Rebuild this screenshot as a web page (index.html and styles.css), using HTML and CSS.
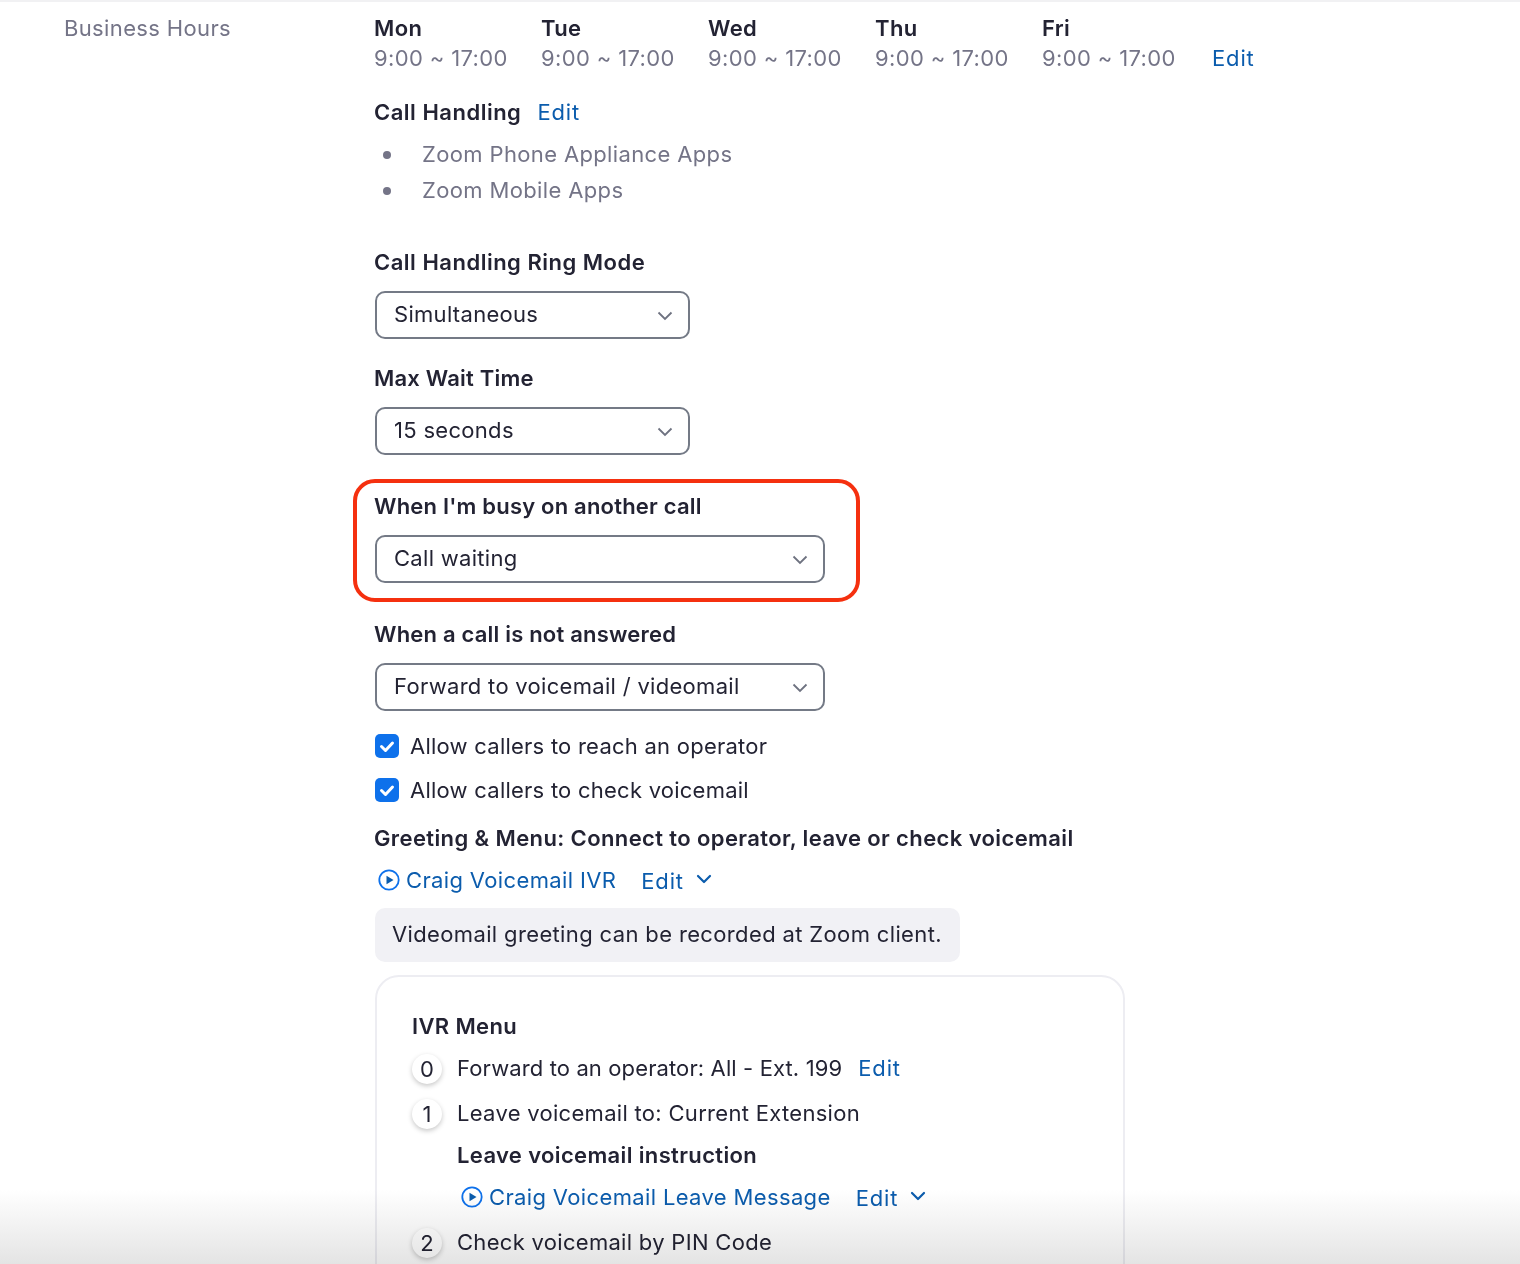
FILE: index.html
```html
<!DOCTYPE html>
<html lang="en">
<head>
<meta charset="utf-8">
<title>Business Hours</title>
<link rel="stylesheet" href="styles.css">
</head>
<body>
<main class="page">
  <div class="side-label">Business Hours</div>
  <div class="content">
    <div class="hours">
      <div class="day"><div class="strong">Mon</div><div class="muted">9:00 ~ 17:00</div></div>
      <div class="day"><div class="strong">Tue</div><div class="muted">9:00 ~ 17:00</div></div>
      <div class="day"><div class="strong">Wed</div><div class="muted">9:00 ~ 17:00</div></div>
      <div class="day"><div class="strong">Thu</div><div class="muted">9:00 ~ 17:00</div></div>
      <div class="day"><div class="strong">Fri</div><div class="muted">9:00 ~ 17:00</div></div>
      <a class="link edit hours-edit">Edit</a>
    </div>

    <div class="strong handling"><span>Call Handling</span><a class="link edit">Edit</a></div>
    <ul class="apps">
      <li>Zoom Phone Appliance Apps</li>
      <li>Zoom Mobile Apps</li>
    </ul>

    <div class="strong ring-label">Call Handling Ring Mode</div>
    <div class="select narrow"><span>Simultaneous</span><svg class="chev" viewBox="0 0 16 10"><path d="M1.5 1.5 8 8l6.5-6.5"/></svg></div>

    <div class="strong field-label">Max Wait Time</div>
    <div class="select narrow"><span>15 seconds</span><svg class="chev" viewBox="0 0 16 10"><path d="M1.5 1.5 8 8l6.5-6.5"/></svg></div>

    <div class="highlighted">
      <div class="strong busy-label">When I'm busy on another call</div>
      <div class="select wide"><span>Call waiting</span><svg class="chev" viewBox="0 0 16 10"><path d="M1.5 1.5 8 8l6.5-6.5"/></svg></div>
    </div>

    <div class="strong busy-label">When a call is not answered</div>
    <div class="select wide"><span>Forward to voicemail / videomail</span><svg class="chev" viewBox="0 0 16 10"><path d="M1.5 1.5 8 8l6.5-6.5"/></svg></div>

    <div class="check first"><span class="box"><svg viewBox="0 0 24 24"><path d="M6.5 12.5 10.5 16.5 17.5 9"/></svg></span>Allow callers to reach an operator</div>
    <div class="check second"><span class="box"><svg viewBox="0 0 24 24"><path d="M6.5 12.5 10.5 16.5 17.5 9"/></svg></span>Allow callers to check voicemail</div>

    <div class="strong greeting">Greeting &amp; Menu: Connect to operator, leave or check voicemail</div>
    <div class="audio">
      <svg class="play" viewBox="0 0 22 22"><circle cx="11" cy="11" r="9.7"/><path d="M8.5 6.8 15.5 11l-7 4.2z"/></svg>
      <a class="link">Craig Voicemail IVR</a>
      <a class="link edit audio-edit">Edit</a>
      <svg class="edit-chev" viewBox="0 0 16 10"><path d="M2 2 8 8l6-6"/></svg>
    </div>
    <div class="note">Videomail greeting can be recorded at Zoom client.</div>

    <section class="card">
      <div class="strong">IVR Menu</div>
      <div class="menu-row row-0"><span class="num">0</span><span class="tight">Forward to an operator: All - Ext. 199</span><a class="link edit">Edit</a></div>
      <div class="menu-row row-1"><span class="num">1</span><span>Leave voicemail to: Current Extension</span></div>
      <div class="strong instruction">Leave voicemail instruction</div>
      <div class="audio sub">
        <svg class="play" viewBox="0 0 22 22"><circle cx="11" cy="11" r="9.7"/><path d="M8.5 6.8 15.5 11l-7 4.2z"/></svg>
        <a class="link">Craig Voicemail Leave Message</a>
        <a class="link edit audio-edit">Edit</a>
        <svg class="edit-chev" viewBox="0 0 16 10"><path d="M2 2 8 8l6-6"/></svg>
      </div>
      <div class="menu-row row-2"><span class="num">2</span><span>Check voicemail by PIN Code</span></div>
    </section>
  </div>
</main>
<div class="fade"></div>
</body>
</html>
```
FILE: styles.css
```css
*, *::before { box-sizing: border-box; }
html, body { margin: 0; height: 1264px; overflow: hidden; background: #fff; }
body {
  font-family: Inter, "Noto Sans", sans-serif;
  font-size: 22px;
  line-height: 30px;
  letter-spacing: .36px;
  color: #232333;
  border-top: 2px solid #f1f1f3;
  position: relative;
}
.page { display: flex; padding-top: 11px; }
.side-label { width: 374px; padding-left: 64px; color: #747487; }
.content { flex: 1; min-width: 0; }
.strong { font-weight: 640; color: #232333; }
.muted { color: #747487; }
.link { color: #0b5cad; }
.edit { letter-spacing: .85px; }

.hours { display: flex; align-items: flex-end; }
.day { width: 167px; }
.hours-edit { margin-left: 3px; }

.handling { display: flex; gap: 16px; margin-top: 24px; letter-spacing: .5px; }
.handling .link { font-weight: 400; }
.apps { list-style: none; margin: 12px 0 0; padding: 0; color: #747487; }
.apps li { position: relative; padding-left: 48px; margin-bottom: 6px; }
.apps li::before {
  content: ""; position: absolute; left: 9px; top: 12px;
  width: 8px; height: 8px; border-radius: 50%; background: #747487;
}

.ring-label { margin-top: 42px; letter-spacing: .5px; }
.field-label { margin-top: 24px; letter-spacing: .2px; }
.select {
  display: flex; align-items: center; justify-content: space-between;
  height: 48px; margin: 14px 0 0 1px; padding: 0 15px 2px 17px;
  border: 2px solid #747a86; border-radius: 10px; background: #fff;
  letter-spacing: .3px;
}
.narrow { width: 315px; }
.wide { width: 450px; }
.chev { width: 16px; height: 10px; position: relative; top: 2px; fill: none; stroke: #6e7280; stroke-width: 1.8; }

.highlighted { position: relative; }
.highlighted::before {
  content: ""; position: absolute; left: -21px; top: 24px; width: 507px; height: 123px;
  border: 4px solid #f5300f; border-radius: 22px; pointer-events: none;
}
.busy-label { padding-top: 36px; letter-spacing: .2px; }

.check { display: flex; align-items: center; gap: 11px; letter-spacing: .24px; }
.check.first { margin-top: 20px; }
.check.second { margin-top: 14px; }
.box { width: 24px; height: 24px; margin-left: 1px; border-radius: 5px; background: #0e71eb; display: block; }
.box svg { display: block; width: 24px; height: 24px; fill: none; stroke: #fff; stroke-width: 3; stroke-linecap: round; stroke-linejoin: round; }

.greeting { margin-top: 18px; letter-spacing: .39px; }
.audio { display: flex; align-items: center; margin-top: 12px; padding-left: 4px; }
.play { width: 22px; height: 22px; margin-right: 6px; flex: none; }
.play circle { fill: none; stroke: #0e71eb; stroke-width: 1.8; }
.play path { fill: #0b5cad; }
.audio-edit { margin-left: 25px; position: relative; top: 1px; }
.edit-chev { width: 16px; height: 10px; margin-left: 12px; position: relative; top: -1px; fill: none; stroke: #0b5cad; stroke-width: 2.2; stroke-linecap: round; stroke-linejoin: round; }

.note {
  width: 585px; height: 54px; margin: 13px 0 0 1px; padding: 11px 17px;
  background: #f1f1f5; border-radius: 10px; color: #232333;
}

.card {
  width: 750px; height: 400px; margin: 13px 0 0 1px; padding: 34px 35px;
  border: 2px solid #ededf2; border-radius: 24px;
}
.menu-row { display: flex; align-items: center; letter-spacing: .3px; }
.tight { letter-spacing: .12px; }
.row-0 { margin-top: 12px; }
.row-1 { margin-top: 15px; }
.row-2 { margin-top: 15px; }
.num {
  width: 30px; height: 30px; margin-right: 15px; border-radius: 50%; flex: none;
  background: #fff; text-align: center; box-shadow: 0 2px 5px rgba(0, 0, 0, .22);
  position: relative; top: 1px;
}
.menu-row .link { margin-left: 16px; }
.instruction { margin-top: 12px; margin-left: 45px; }
.audio.sub { margin-left: 45px; }

.fade {
  position: absolute; left: 0; right: 0; bottom: 0; height: 74px; pointer-events: none;
  mix-blend-mode: multiply;
  background: linear-gradient(to bottom, #fff, #e4e4e4);
}
```
